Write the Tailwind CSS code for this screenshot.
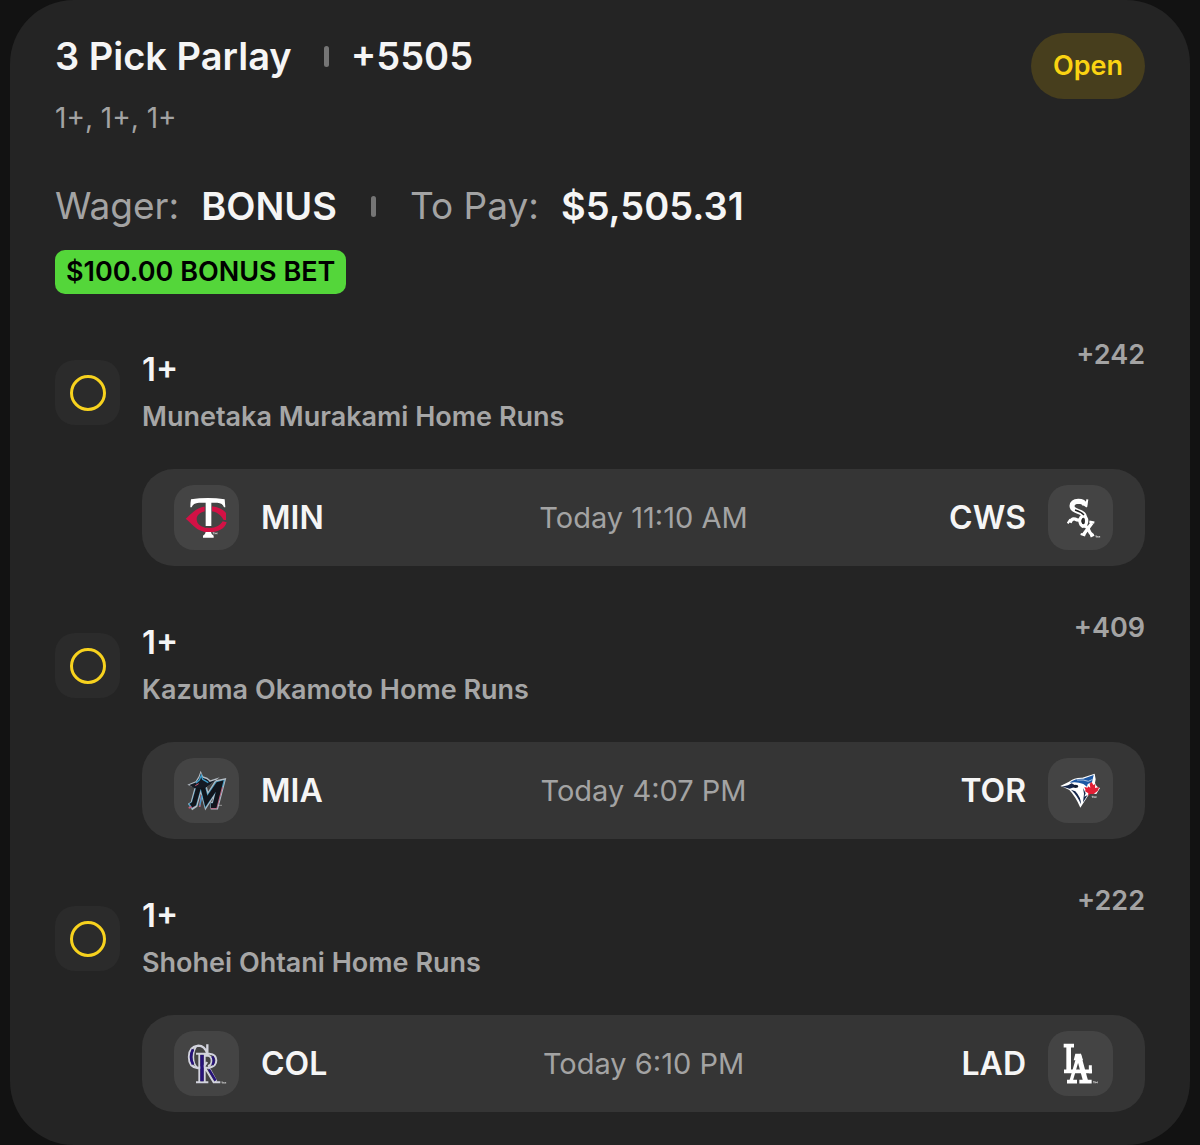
<!DOCTYPE html>
<html lang="en">
<head>
    <meta charset="UTF-8">
    <meta name="viewport" content="width=device-width, initial-scale=1.0">
    <title>3 Pick Parlay</title>
    <script src="https://cdn.jsdelivr.net/npm/@tailwindcss/browser@4"></script>
</head>
<body class="bg-[#121212] text-[#f5f5f5] font-['Inter',sans-serif]">
    <main class="mx-[10px] px-[45px] pt-[33px] pb-[33px] rounded-[64px] bg-[#242424]">
        <!-- Header -->
        <header class="flex items-start justify-between">
            <div>
                <div class="flex items-center text-[38px] leading-[46px] font-semibold">
                    <h1>3 Pick Parlay</h1>
                    <span class="w-[5px] h-[21px] ml-[32px] mr-[22px] rounded-sm bg-[#757575]"></span>
                    <span>+5505</span>
                </div>
                <p class="mt-[19px] text-[28px] leading-[40px] text-[#a3a3a3]">1+, 1+, 1+</p>
            </div>
            <span class="px-[22px] rounded-full bg-[#473e1d] text-[#fad312] text-[27px] leading-[66px] font-semibold">Open</span>
        </header>

        <!-- Wager -->
        <section class="mt-[45px]">
            <div class="flex items-center text-[38px] leading-[46px]">
                <span class="text-[37px] text-[#a3a3a3]">Wager:</span>
                <span class="ml-[22px] font-semibold">BONUS</span>
                <span class="w-[5px] h-[21px] mx-[34px] rounded-sm bg-[#757575]"></span>
                <span class="text-[37px] text-[#a3a3a3]">To Pay:</span>
                <span class="ml-[22px] font-semibold">$5,505.31</span>
            </div>
            <span class="inline-block mt-[21px] px-[11px] rounded-[10px] bg-[#54d63a] text-black text-[27px] leading-[44px] font-semibold">$100.00 BONUS BET</span>
        </section>

        <!-- Legs -->
        <ul class="mt-[42px] space-y-[43px]">
            <li>
                <div class="flex items-start">
                    <span class="flex items-center justify-center size-[65px] mt-[24px] mr-[22px] rounded-[20px] bg-[#2b2b2b]">
                        <span class="size-[36px] rounded-full border-3 border-[#f7d21e]"></span>
                    </span>
                    <div class="flex-1 pt-[9px]">
                        <h2 class="text-[33px] leading-[48px] font-semibold">1+</h2>
                        <p class="text-[27px] leading-[48px] font-semibold text-[#a6a6a6]">Munetaka Murakami Home Runs</p>
                    </div>
                    <span class="text-[27px] leading-[38px] font-semibold text-[#a3a3a3]">+242</span>
                </div>
                <div class="grid grid-cols-[1fr_auto_1fr] items-center ml-[87px] mt-[28px] px-[32px] py-[16px] rounded-[32px] bg-[#353535]">
                    <div class="flex items-center gap-[22px] text-[32px] font-semibold">
                        <svg class="size-[65px] rounded-[20px] bg-[#444]" viewBox="14 16 195 195" role="img" aria-label="Minnesota Twins" fill="none">
                            <path fill="#d31145" fill-rule="evenodd" d="M49 117C66 104 80 80 119 80c25 0 42 8 51 20v21h-7c-8-15-22-27-43-27-24 0-38 10-38 24 0 16 15 27 38 27 20 0 34-9 40-20l12 3c-5 19-25 30-52 30-39 0-54-29-71-41z"/>
                            <path stroke="#444" stroke-width="4" d="M108 70v74M126 70v74"/>
                            <path fill="#fff" d="M63 83q0-13 2-24 51-8 101 0l2 24h-4q-4-13-20-14h-18v70h-17V69H89q-18 1-22 14zM109 157h16q1 9 8 11v6h-32v-6q7-2 8-11z"/>
                            <path stroke="#ddd" stroke-width="2" d="M130 159h5m-2 0v5m4 0v-5l3 4 3-4v5"/>
                        </svg>
                        MIN
                    </div>
                    <time class="text-[29px] text-[#a3a3a3]">Today 11:10 AM</time>
                    <div class="flex items-center justify-end gap-[22px] text-[32px] font-semibold">
                        CWS
                        <svg class="size-[65px] rounded-[20px] bg-[#444]" viewBox="13 16 195 195" role="img" aria-label="Chicago White Sox" fill="none" stroke="#fff" stroke-linejoin="round">
                            <path stroke-width="15" d="M124 76q-4-11-20-11-18 1-19 14 0 10 18 16 20 6 19 17"/>
                            <path stroke-width="10" d="M117 118q-12 7-23 0-10-3-15 11"/>
                            <path stroke-width="6" d="M131 59l-3 21-10-8M72 131l8-12"/>
                            <ellipse cx="119" cy="124" rx="10" ry="15" stroke-width="10" fill="#333"/>
                            <path stroke-width="10" d="M121 138q9 2 14 13 4 11 11 15M145 130l-26 35"/>
                            <path stroke-width="7" d="M137 126l15 3M111 163l14 4M140 170l11-5M114 142l9-5"/>
                            <path stroke="#222" stroke-width="4" d="M94 91q18 5 27 15M117 118q-5 8 3 14"/>
                            <path stroke="#ddd" stroke-width="2" d="M155 169h5m-2 0v5m4 0v-5l3 4 3-4v5"/>
                        </svg>
                    </div>
                </div>
            </li>

            <li>
                <div class="flex items-start">
                    <span class="flex items-center justify-center size-[65px] mt-[24px] mr-[22px] rounded-[20px] bg-[#2b2b2b]">
                        <span class="size-[36px] rounded-full border-3 border-[#f7d21e]"></span>
                    </span>
                    <div class="flex-1 pt-[9px]">
                        <h2 class="text-[33px] leading-[48px] font-semibold">1+</h2>
                        <p class="text-[27px] leading-[48px] font-semibold text-[#a6a6a6]">Kazuma Okamoto Home Runs</p>
                    </div>
                    <span class="text-[27px] leading-[38px] font-semibold text-[#a3a3a3]">+409</span>
                </div>
                <div class="grid grid-cols-[1fr_auto_1fr] items-center ml-[87px] mt-[28px] px-[32px] py-[16px] rounded-[32px] bg-[#353535]">
                    <div class="flex items-center gap-[22px] text-[32px] font-semibold">
                        <svg class="size-[65px] rounded-[20px] bg-[#444]" viewBox="14 15 195 195" role="img" aria-label="Miami Marlins" fill="none">
                            <!-- silver, blue and pink edges below the black mark -->
                            <path stroke="#b4bcc4" stroke-width="23" d="M62 162l12-8 14-52 12-4 12 46 33-52 10-2-18 68h-13"/>
                            <path fill="#b4bcc4" d="M54 95l25-10 9-15 6-17 7 17q15 3 22 12l28-9-23 18-15 10-35 4-15-6z"/>
                            <path stroke="#4698bd" stroke-width="17" d="M61 160l13-8 14-50 12-3 11 46 34-52 10-2-18 67h-13"/>
                            <path stroke="#c65f78" stroke-width="5" d="M58 165l17-7M124 165h17l17-63M96 128l-5 34"/>
                            <path stroke="#11151c" stroke-width="14" d="M65 158l9-6 14-50 12-1 11 44 35-51 7-2-17 66h-11"/>
                            <path fill="#151b25" d="M60 96l21-8 9-14 5-14 4 14q16 3 22 13l20-7-19 15-13 9-34 2z"/>
                            <path stroke="#3d9dca" stroke-width="4" d="M80 90l10-9 6-14 4 12 17 10M98 128l-7 30"/>
                            <path stroke="#d85c74" stroke-width="3" d="M78 98l10-6"/>
                            <path stroke="#bbb" stroke-width="2" d="M149 157h9"/>
                        </svg>
                        MIA
                    </div>
                    <time class="text-[29px] text-[#a3a3a3]">Today 4:07 PM</time>
                    <div class="flex items-center justify-end gap-[22px] text-[32px] font-semibold">
                        TOR
                        <svg class="size-[65px] rounded-[20px] bg-[#444]" viewBox="13 15 195 195" role="img" aria-label="Toronto Blue Jays">
                            <path fill="#fff" d="M50 99l26-13q16-13 40-12l37-12 3 17-2 11q5 14 15 15l-11 18-20-2-28 43q-15-34-33-53l-17-8z"/>
                            <path fill="#1d58a5" d="M80 87q15-11 39-10l31-11-5 22-13 5-2 8-11-8q-19-7-39-4z"/>
                            <path fill="#17284b" d="M54 101l19-4 11-6 16 9-22 7q-14-4-24-6zM82 110l13 5q17 18 17 39-11-27-30-44zM118 105l8 16-4 10 10-5-14 22 3-26z"/>
                            <ellipse cx="96" cy="100" rx="8" ry="5" fill="#111b2e"/>
                            <path fill="none" stroke="#a7bfdd" stroke-width="3" d="M100 81q20-2 34 4l13-6"/>
                            <path fill="#e21f35" d="M144 87l5 9 6-3-1 12 13-3-5 12-12 9h-11l-6 5 1-7-11-7 3-2-4-10 10 2 1-4 7 4-2-12z"/>
                            <path stroke="#ddd" stroke-width="2" fill="none" d="M144 130h5m-2 0v5m4 0v-5l3 4 3-4v5"/>
                        </svg>
                    </div>
                </div>
            </li>

            <li>
                <div class="flex items-start">
                    <span class="flex items-center justify-center size-[65px] mt-[24px] mr-[22px] rounded-[20px] bg-[#2b2b2b]">
                        <span class="size-[36px] rounded-full border-3 border-[#f7d21e]"></span>
                    </span>
                    <div class="flex-1 pt-[9px]">
                        <h2 class="text-[33px] leading-[48px] font-semibold">1+</h2>
                        <p class="text-[27px] leading-[48px] font-semibold text-[#a6a6a6]">Shohei Ohtani Home Runs</p>
                    </div>
                    <span class="text-[27px] leading-[38px] font-semibold text-[#a3a3a3]">+222</span>
                </div>
                <div class="grid grid-cols-[1fr_auto_1fr] items-center ml-[87px] mt-[28px] px-[32px] py-[16px] rounded-[32px] bg-[#353535]">
                    <div class="flex items-center gap-[22px] text-[32px] font-semibold">
                        <svg class="size-[65px] rounded-[20px] bg-[#444]" viewBox="14 16 195 195" role="img" aria-label="Colorado Rockies" fill="none">
                            <g stroke="#d2d3dd">
                                <path stroke-width="7" d="M114 56v28q-8-24-27-24-28 3-28 34t27 33q18 0 27-18"/>
                                <path stroke-width="5" d="M82 60q-10 13-10 34 0 20 11 32"/>
                                <path stroke-width="6" d="M80 84h40q21 2 21 20t-21 22h-13l26 44h20M90 86v82M106 86v82M80 170h37M119 126l22 41M107 90h10q10 2 10 15t-11 16"/>
                            </g>
                            <path stroke="#27127a" stroke-width="8" d="M71 71q-12 23 0 45"/>
                            <path stroke="#27127a" stroke-width="10" d="M98 88v79"/>
                            <path stroke="#27127a" stroke-width="7" d="M129 92q8 13 0 26M119 131l20 34"/>
                            <path stroke="#ccc" stroke-width="2" d="M156 169h5m-2 0v5m4 0v-5l3 4 3-4v5"/>
                        </svg>
                        COL
                    </div>
                    <time class="text-[29px] text-[#a3a3a3]">Today 6:10 PM</time>
                    <div class="flex items-center justify-end gap-[22px] text-[32px] font-semibold">
                        LAD
                        <svg class="size-[65px] rounded-[20px] bg-[#444]" viewBox="13 16 195 195" role="img" aria-label="Los Angeles Dodgers" fill="none">
                            <g stroke="#fff">
                                <path stroke-width="11" d="M60 60h31M61 137h84M70 168h30M107 168h37"/>
                                <path stroke-width="14" d="M75 58v79"/>
                                <path stroke-width="9" d="M140 143v-24"/>
                                <path stroke-width="10" d="M82 167l22-76"/>
                                <path stroke-width="15" d="M104 86l22 81"/>
                            </g>
                            <path fill="#fff" d="M95 84h17l6 20H90z"/>
                            <path stroke="#ddd" stroke-width="2" d="M148 168h5m-2 0v5m4 0v-5l3 4 3-4v5"/>
                        </svg>
                    </div>
                </div>
            </li>
        </ul>
    </main>
</body>
</html>
